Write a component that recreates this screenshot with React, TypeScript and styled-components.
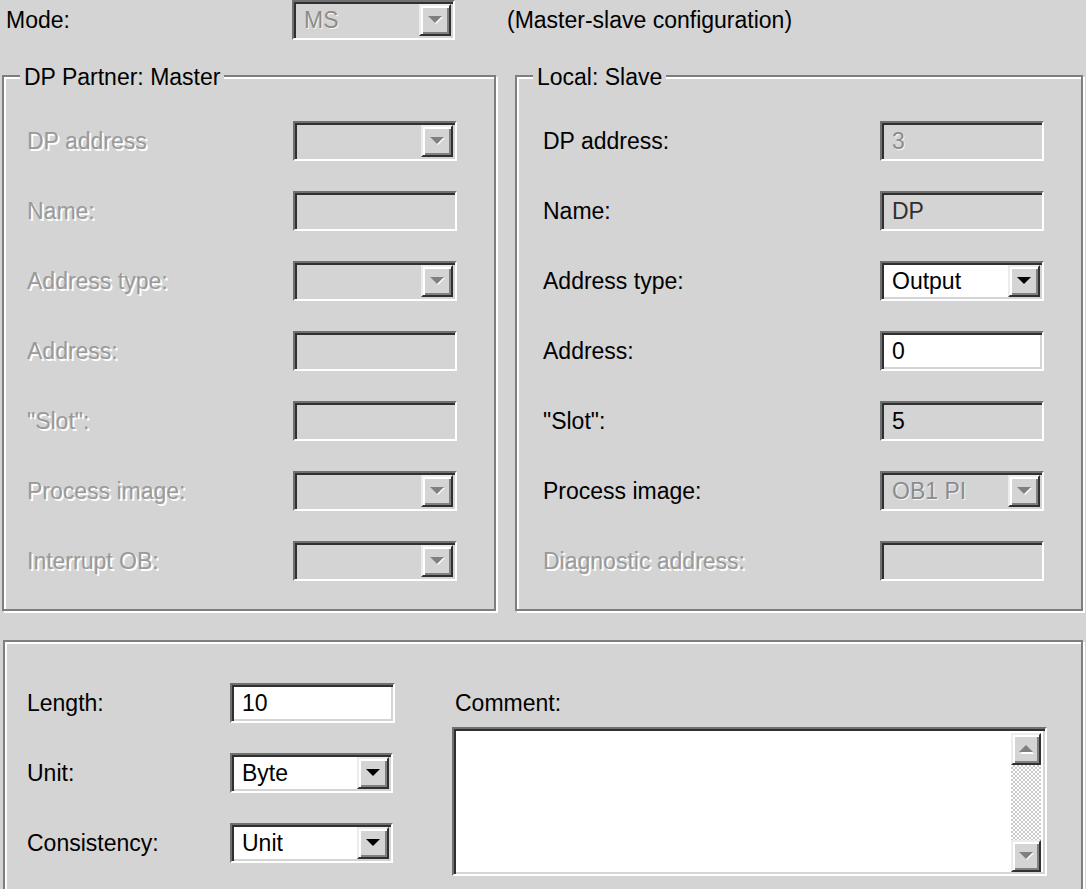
import { Fragment } from 'react';
import styled, { createGlobalStyle, css } from 'styled-components';

const GlobalStyle = createGlobalStyle`
  html, body {
    margin: 0;
    padding: 0;
    background: #d4d4d4;
  }
  body {
    font-family: 'Liberation Sans', Arial, sans-serif;
  }
`;

const Window = styled('div')`
  width: 1086px;
  height: 889px;
  overflow: hidden;
  box-sizing: border-box;
  padding: 0 3px 0 2px;
  background: #d4d4d4;
  font-size: 23px;
  color: #000;
`;

const disabledText = css`
  color: #9a9a9a;
  text-shadow: 2px 2px 0 #fff;
`;

const Label = styled('span')<{ $disabled?: boolean }>`
  line-height: 40px;
  white-space: nowrap;
  ${(p) => p.$disabled && disabledText}
`;

const ModeRow = styled('div')`
  display: flex;
  align-items: center;
  height: 40px;
  padding-left: 4px;
`;

const ModeLabel = styled(Label)`
  width: 286px;
`;

const Description = styled(Label)`
  margin-left: 52px;
`;

const sunken = css`
  box-sizing: border-box;
  border: 2px solid;
  border-color: #707070 #fff #fff #707070;
  box-shadow: inset 2px 2px 0 #303030, inset -2px -2px 0 #d4d4d4;
`;

const Field = styled('div')<{ $white?: boolean; $dim?: boolean; $width?: number }>`
  ${sunken}
  width: ${(p) => p.$width ?? 164}px;
  height: 40px;
  display: flex;
  align-items: center;
  padding: 2px 2px 2px 10px;
  background: ${(p) => (p.$white ? '#fff' : '#d4d4d4')};
  color: ${(p) => (p.$dim ? '#8c8c8c' : '#000')};
  ${(p) => p.$dim && 'text-shadow: 1px 1px 0 #f4f4f4;'}
`;

const FieldText = styled('span')<{ $soft?: boolean }>`
  flex: 1;
  white-space: nowrap;
  overflow: hidden;
  ${(p) => p.$soft && 'color: #303030;'}
`;

const raised = css`
  box-sizing: border-box;
  border: 2px solid;
  border-color: #ececec #303030 #303030 #ececec;
  box-shadow: inset 2px 2px 0 #fff, inset -2px -2px 0 #808080;
  background: #d4d4d4;
  display: flex;
  align-items: center;
  justify-content: center;
`;

const DropButton = styled('div')`
  ${raised}
  width: 32px;
  height: 32px;
  flex: none;
`;

const Arrow = ({ up, grey }: { up?: boolean; grey?: boolean }) => (
  <svg width="15" height="9" viewBox="0 0 15 9">
    {grey && <polygon points={up ? '8,2 15,9 1,9' : '1,1 15,1 8,8'} fill="#fff" />}
    <polygon points={up ? '7,0 14,7 0,7' : '0,0 14,0 7,7'} fill={grey ? '#808080' : '#000'} />
  </svg>
);

const Combo = ({ value, white, dim, width }: { value?: string; white?: boolean; dim?: boolean; width?: number }) => (
  <Field $white={white} $dim={dim} $width={width}>
    <FieldText>{value}</FieldText>
    <DropButton>
      <Arrow grey={dim || !white} />
    </DropButton>
  </Field>
);

const GroupsRow = styled('div')`
  display: flex;
  gap: 19px;
  margin-top: 35px;
`;

const etched = css`
  box-sizing: border-box;
  border: 2px solid #7e7e7e;
  box-shadow: inset 2px 2px 0 #fff, 2px 2px 0 #fff;
`;

const Group = styled('div')<{ $width?: number }>`
  ${etched}
  position: relative;
  ${(p) => (p.$width ? `width: ${p.$width}px;` : 'flex: 1;')}
`;

const GroupTitle = styled('span')`
  position: absolute;
  top: -20px;
  left: 16px;
  padding: 0 4px;
  background: #d4d4d4;
  line-height: 40px;
  white-space: nowrap;
`;

const FormGrid = styled('div')<{ $labelWidth: number; $padLeft: number }>`
  display: grid;
  grid-template-columns: ${(p) => p.$labelWidth}px 164px;
  grid-auto-rows: 40px;
  row-gap: 30px;
  align-items: center;
  padding: 44px 0 28px ${(p) => p.$padLeft}px;
`;

const BottomPanel = styled('div')`
  ${etched}
  margin: 29px 0 0 1px;
  height: 320px;
  display: flex;
  padding: 41px 0 0 22px;
`;

const SmallGrid = styled('div')`
  display: grid;
  grid-template-columns: 203px 165px;
  grid-auto-rows: 40px;
  row-gap: 30px;
  align-items: center;
  align-self: flex-start;
`;

const CommentBlock = styled('div')`
  display: flex;
  flex-direction: column;
  margin-left: 57px;
`;

const CommentLabel = styled(Label)`
  margin-left: 3px;
  margin-bottom: 4px;
`;

const TextArea = styled('div')`
  ${sunken}
  width: 595px;
  height: 149px;
  background: #fff;
  display: flex;
  justify-content: flex-end;
  padding: 4px 4px 2px 4px;
`;

const ScrollBar = styled('div')`
  width: 30px;
  display: flex;
  flex-direction: column;
  justify-content: space-between;
  background-color: #fff;
  background-image: repeating-conic-gradient(#c8c8c8 0% 25%, #fff 0% 50%);
  background-size: 4px 4px;
`;

const ScrollButton = styled('div')`
  ${raised}
  width: 30px;
  height: 32px;
`;

const leftRows = ['DP address', 'Name:', 'Address type:', 'Address:', '"Slot":', 'Process image:', 'Interrupt OB:'];
const leftCombo = [true, false, true, false, false, true, true];

const App = () => {
  return (
    <Window>
      <GlobalStyle />
      <ModeRow>
        <ModeLabel>Mode:</ModeLabel>
        <Combo value="MS" dim width={163} />
        <Description>(Master-slave configuration)</Description>
      </ModeRow>

      <GroupsRow>
        <Group $width={494}>
          <GroupTitle>DP Partner: Master</GroupTitle>
          <FormGrid $labelWidth={266} $padLeft={23}>
            {leftRows.map((label, i) => (
              <Fragment key={label}>
                <Label $disabled>{label}</Label>
                {leftCombo[i] ? <Combo /> : <Field />}
              </Fragment>
            ))}
          </FormGrid>
        </Group>

        <Group>
          <GroupTitle>Local: Slave</GroupTitle>
          <FormGrid $labelWidth={337} $padLeft={26}>
            <Label>DP address:</Label>
            <Field $dim>
              <FieldText>3</FieldText>
            </Field>
            <Label>Name:</Label>
            <Field>
              <FieldText $soft>DP</FieldText>
            </Field>
            <Label>Address type:</Label>
            <Combo value="Output" white />
            <Label>Address:</Label>
            <Field $white>
              <FieldText>0</FieldText>
            </Field>
            <Label>"Slot":</Label>
            <Field>
              <FieldText>5</FieldText>
            </Field>
            <Label>Process image:</Label>
            <Combo value="OB1 PI" dim />
            <Label $disabled>Diagnostic address:</Label>
            <Field />
          </FormGrid>
        </Group>
      </GroupsRow>

      <BottomPanel>
        <SmallGrid>
          <Label>Length:</Label>
          <Field $white $width={165}>
            <FieldText>10</FieldText>
          </Field>
          <Label>Unit:</Label>
          <Combo value="Byte" white width={163} />
          <Label>Consistency:</Label>
          <Combo value="Unit" white width={163} />
        </SmallGrid>
        <CommentBlock>
          <CommentLabel>Comment:</CommentLabel>
          <TextArea>
            <ScrollBar>
              <ScrollButton>
                <Arrow up grey />
              </ScrollButton>
              <ScrollButton>
                <Arrow grey />
              </ScrollButton>
            </ScrollBar>
          </TextArea>
        </CommentBlock>
      </BottomPanel>
    </Window>
  );
};

export default App;
